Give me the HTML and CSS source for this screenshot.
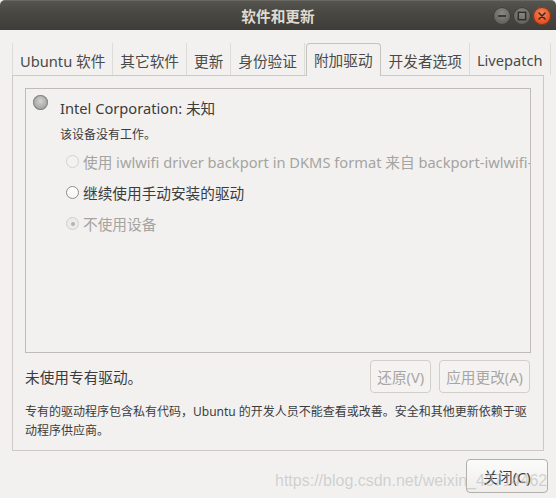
FILE: index.html
```html
<!DOCTYPE html>
<html lang="zh-CN">
<head>
<meta charset="utf-8">
<title>软件和更新</title>
<link rel="stylesheet" href="styles.css">
</head>
<body>
<div class="window">
  <header class="titlebar">
    <div></div>
    <div class="title">软件和更新</div>
    <div class="wm-buttons">
      <span class="wm-btn wm-min"><svg width="18" height="18" viewBox="0 0 18 18"><rect x="5" y="8.2" width="8" height="1.6" fill="#2e2d2a"/></svg></span>
      <span class="wm-btn wm-max"><svg width="18" height="18" viewBox="0 0 18 18"><rect x="5.3" y="5.3" width="7.4" height="7.4" fill="none" stroke="#2e2d2a" stroke-width="1.4"/></svg></span>
      <span class="wm-btn wm-close"><svg width="18" height="18" viewBox="0 0 18 18"><path d="M6 6 L12 12 M12 6 L6 12" stroke="#3a2a22" stroke-width="1.6" stroke-linecap="round"/></svg></span>
    </div>
  </header>

  <main class="main">
    <nav class="tabs">
      <span class="tab first">Ubuntu 软件</span>
      <span class="tab">其它软件</span>
      <span class="tab">更新</span>
      <span class="tab before-active">身份验证</span>
      <span class="tab active">附加驱动</span>
      <span class="tab">开发者选项</span>
      <span class="tab">Livepatch</span>
    </nav>

    <section class="notebook">
      <div class="frame">
        <div class="device">
          <span class="radio-big"></span>
          <div class="device-body">
            <div class="device-title">Intel Corporation: 未知</div>
            <div class="device-desc">该设备没有工作。</div>
            <div class="options">
              <label class="option disabled"><span class="radio"></span><span class="opt-text">使用 iwlwifi driver backport in DKMS format 来自 backport-iwlwifi-dkms (开源)</span></label>
              <label class="option"><span class="radio enabled"></span><span class="opt-text">继续使用手动安装的驱动</span></label>
              <label class="option disabled"><span class="radio checked"></span><span class="opt-text">不使用设备</span></label>
            </div>
          </div>
        </div>
      </div>

      <div class="status-row">
        <span class="status">未使用专有驱动。</span>
        <div class="status-buttons">
          <button class="btn" disabled>还原(V)</button>
          <button class="btn" disabled>应用更改(A)</button>
        </div>
      </div>

      <p class="note">专有的驱动程序包含私有代码，Ubuntu 的开发人员不能查看或改善。安全和其他更新依赖于驱动程序供应商。</p>
    </section>

    <div class="actions">
      <button class="btn close-btn">关闭(C)</button>
    </div>
  </main>

  <div class="watermark">https://blog.csdn.net/weixin_43714462</div>
</div>
</body>
</html>
```

FILE: styles.css
```css
* { box-sizing: border-box; }

html, body {
  margin: 0;
  padding: 0;
}

body {
  width: 556px;
  height: 498px;
  overflow: hidden;
  background: #f2f1f0;
  font-family: "Noto Sans", "Noto Sans CJK SC", sans-serif;
  color: #3c3c3c;
}

.window {
  position: relative;
  width: 556px;
  height: 498px;
  background: #f2f1f0;
}

/* ---------- title bar ---------- */
.titlebar {
  height: 30px;
  display: grid;
  grid-template-columns: 1fr auto 1fr;
  align-items: center;
  background: linear-gradient(#56544e 0%, #4a4843 40%, #3d3c38 100%);
  border-top: 1px solid #6a6862;
  border-radius: 5px 5px 0 0;
}

.title {
  font-family: "Noto Sans CJK SC", sans-serif;
  font-weight: 700;
  font-size: 14.67px;
  color: #dfdbd2;
  line-height: 20px;
}

.wm-buttons {
  display: flex;
  justify-content: flex-end;
  gap: 2px;
  padding-right: 5px;
}

.wm-btn {
  width: 18px;
  height: 18px;
  border-radius: 50%;
  display: block;
}

.wm-btn svg { display: block; }

.wm-min, .wm-max {
  background: radial-gradient(circle at 50% 35%, #8a8882 0%, #6b6963 55%, #55534e 100%);
  box-shadow: inset 0 0 0 1px #3a3935;
}

.wm-close {
  background: radial-gradient(circle at 50% 35%, #f6855a 0%, #e9592a 55%, #cf4618 100%);
  box-shadow: inset 0 0 0 1px #7a3416;
}

/* ---------- main ---------- */
.main {
  padding-top: 12px;
}

.tabs {
  display: flex;
  height: 33px;
  margin: 0 12px;
  font-size: 14.67px;
  color: #4a4a48;
}

.tab {
  display: flex;
  align-items: center;
  padding: 2px 7px 0;
  border-right: 1px solid #dedcd7;
  margin-top: 1px;
  white-space: nowrap;
}

.tab.first { border-left: 1px solid #dedcd7; }

.tab.active {
  margin: 0 1px 0 1px;
  border: 1px solid #c6c3be;
  border-bottom: none;
  border-radius: 4px 4px 0 0;
  background: #f2f1f0;
  position: relative;
  top: 1px;
  padding-top: 0;
  padding-bottom: 1px;
}

.tab.before-active { border-right: 1px solid #dedcd7; }

.notebook {
  margin: 0 12px;
  height: 376px;
  border: 1px solid #cdcac5;
  padding: 12px 12px 0;
  display: flex;
  flex-direction: column;
}

.frame {
  height: 265px;
  border: 1px solid #bfbcb7;
  overflow: hidden;
  flex: none;
}

.device {
  display: flex;
  padding: 6px 0 0 7px;
}

.radio-big {
  flex: none;
  width: 15px;
  height: 15px;
  border-radius: 50%;
  background: radial-gradient(circle at 50% 40%, #d4d4d2 0%, #b2b2b0 45%, #8e8e8c 100%);
  box-shadow: inset 0 0 0 1px #858583;
}

.device-body {
  margin-left: 12px;
  flex: 1;
  min-width: 0;
}

.device-title {
  font-size: 14.67px;
  line-height: 20px;
  padding-top: 3px;
  color: #3c3c3c;
}

.device-desc {
  margin-top: 8px;
  font-size: 12px;
  line-height: 18px;
  color: #3c3c3c;
}

.options {
  margin-top: 2px;
  display: flex;
  flex-direction: column;
}

.option {
  height: 31px;
  display: flex;
  align-items: center;
  gap: 4px;
  padding-left: 6px;
  font-size: 14.67px;
  white-space: nowrap;
  color: #3c3c3c;
}

.option.disabled { color: #a5a4a0; }

.radio {
  flex: none;
  width: 13px;
  height: 13px;
  border-radius: 50%;
  border: 1px solid #d3d2ce;
  background: #f3f2f1;
  position: relative;
}

.radio.enabled {
  border-color: #8e8d8a;
  background: linear-gradient(#ffffff, #f4f4f3);
}

.radio.checked {
  border-color: #cfcecb;
  background: #ecebe9;
}

.radio.checked::after {
  content: "";
  position: absolute;
  left: 3.5px;
  top: 3.5px;
  width: 4px;
  height: 4px;
  border-radius: 50%;
  background: #b4b3af;
}

/* ---------- status row ---------- */
.status-row {
  margin-top: 7px;
  display: flex;
  align-items: center;
  justify-content: space-between;
  padding-right: 1px;
}

.status {
  font-size: 14.67px;
  line-height: 20px;
}

.status-buttons {
  display: flex;
  gap: 8px;
}

.btn {
  font-family: "Noto Sans", "Noto Sans CJK SC", sans-serif;
  font-size: 14.67px;
  height: 33px;
  padding: 0 6px;
  border-radius: 4px;
  border: 1px solid #d2cfca;
  background: #f4f3f2;
  color: #a8a6a1;
}

.note {
  margin: 9px 0 0;
  font-size: 12px;
  line-height: 19px;
  color: #3c3c3c;
}

/* ---------- action area ---------- */
.actions {
  display: flex;
  justify-content: flex-end;
  padding: 8px 8px 0 0;
}

.close-btn {
  width: 82px;
  height: 34px;
  border: 1px solid #b3b0ab;
  background: linear-gradient(#fbfbfa, #eeedeb);
  color: #3c3c3c;
}

.watermark {
  position: absolute;
  left: 275px;
  top: 471px;
  font-family: "Liberation Sans", sans-serif;
  font-size: 16px;
  line-height: 20px;
  color: rgba(185, 185, 185, 0.6);
  pointer-events: none;
  white-space: nowrap;
}
```
